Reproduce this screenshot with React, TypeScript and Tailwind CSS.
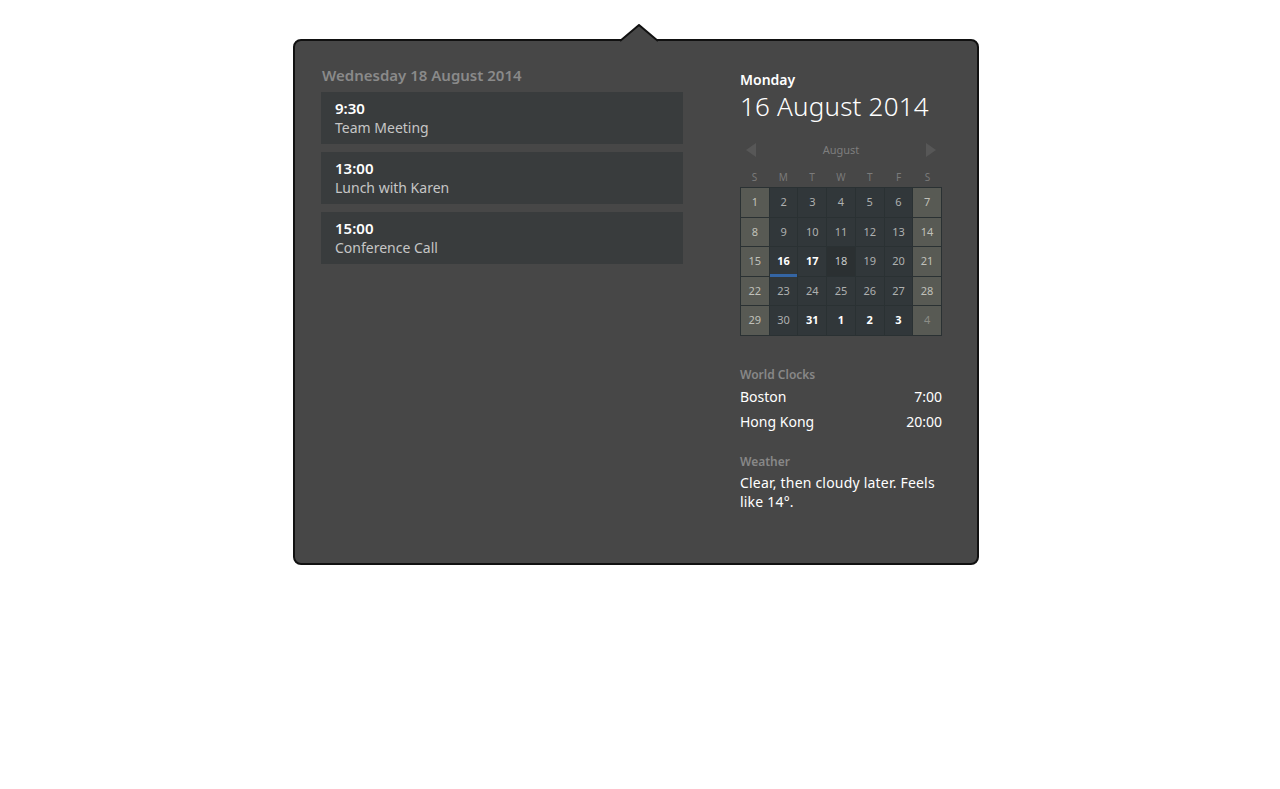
import React from "react";

const events = [
  { time: "9:30", title: "Team Meeting" },
  { time: "13:00", title: "Lunch with Karen" },
  { time: "15:00", title: "Conference Call" },
];

type Day = { n: number; weekend?: boolean; bold?: boolean; today?: boolean; selected?: boolean; other?: boolean };

const weeks: Day[][] = [
  [1, 2, 3, 4, 5, 6, 7],
  [8, 9, 10, 11, 12, 13, 14],
  [15, 16, 17, 18, 19, 20, 21],
  [22, 23, 24, 25, 26, 27, 28],
  [29, 30, 31, 1, 2, 3, 4],
].map((row, r) =>
  row.map((n, c) => ({
    n,
    weekend: c === 0 || c === 6,
    bold: (r === 2 && (c === 1 || c === 2)) || (r === 4 && c >= 2 && c <= 5),
    today: r === 2 && c === 1,
    selected: r === 2 && c === 3,
    other: r === 4 && c >= 3,
  }))
);

function DayCell({ d }: { d: Day }) {
  let cls = "relative flex items-center justify-center h-[28.6px] text-[11px] ";
  if (d.weekend) {
    cls += "bg-[#585a54] " + (d.other ? "text-[#8c8d86]" : "text-[#c0c1ba]");
  } else if (d.selected) {
    cls += "bg-[#2b3032] text-[#c8caca]";
  } else {
    cls += "bg-[#31373a] " + (d.bold ? "text-white font-bold" : "text-[#aeb0b0]");
  }
  return (
    <div className={cls}>
      {d.n}
      {d.today && <div className="absolute left-0 right-0 bottom-[-1px] h-[3px] bg-[#3465a4]" />}
    </div>
  );
}

export default function App() {
  return (
    <div
      className="min-h-[789px] bg-white pt-[39px]"
      style={{ fontFamily: '"Noto Sans", "Open Sans", sans-serif' }}
    >
      <div className="relative ml-[293px] w-[686px] h-[526px] rounded-[8px] border-2 border-[#111] bg-[#474747] flex">
        {/* popover arrow */}
        <svg
          className="absolute left-[325px] top-[-17px]"
          width="38"
          height="19"
          viewBox="0 0 38 19"
        >
          <path d="M0 17 L19 1 L38 17 L38 19 L0 19 Z" fill="#474747" />
          <path d="M0 17 L19 1 L38 17" fill="none" stroke="#111" strokeWidth="2" strokeLinejoin="round" />
        </svg>

        {/* left: events */}
        <div className="ml-[26px] w-[362px] pt-[24px]">
          <div className="text-[15px] leading-[20px] font-semibold text-[#8a8a8a] pl-px mb-[7px]">
            Wednesday 18 August 2014
          </div>
          <div className="flex flex-col gap-[8px]">
            {events.map((e) => (
              <div key={e.time} className="h-[52px] bg-[#393c3d] pl-[14px] pt-[7px]">
                <div className="text-[15px] leading-[19px] font-semibold text-white">{e.time}</div>
                <div className="text-[14px] leading-[20px] text-[#c6c6c6]">{e.title}</div>
              </div>
            ))}
          </div>
        </div>

        {/* right: date, calendar, clocks, weather */}
        <div className="ml-[57px] w-[202px] pt-[29px] text-white">
          <div className="text-[14px] leading-[20px] font-semibold">Monday</div>
          <div className="text-[26px] leading-[32px] font-light tracking-[0.2px]">16 August 2014</div>

          <div className="mt-[19px] h-[18px] flex items-center justify-between px-[6px]">
            <svg width="10" height="14" viewBox="0 0 10 14">
              <path d="M10 0 L0 7 L10 14 Z" fill="#575757" />
            </svg>
            <span className="text-[11px] text-[#7e7e7e]">August</span>
            <svg width="10" height="14" viewBox="0 0 10 14">
              <path d="M0 0 L10 7 L0 14 Z" fill="#575757" />
            </svg>
          </div>

          <div className="mt-[10px] grid grid-cols-7 h-[16px] text-[10px] leading-[16px] text-[#7a7a7a] text-center">
            {["S", "M", "T", "W", "T", "F", "S"].map((l, i) => (
              <span key={i}>{l}</span>
            ))}
          </div>

          <div className="mt-[2px] grid grid-cols-7 gap-px p-px bg-[#2a3133]">
            {weeks.flat().map((d, i) => (
              <DayCell key={i} d={d} />
            ))}
          </div>

          <div className="mt-[30px] text-[12px] leading-[18px] font-semibold text-[#888]">World Clocks</div>
          <div className="flex justify-between text-[14px] leading-[25px]">
            <span>Boston</span>
            <span>7:00</span>
          </div>
          <div className="flex justify-between text-[14px] leading-[25px]">
            <span>Hong Kong</span>
            <span>20:00</span>
          </div>

          <div className="mt-[19px] text-[12px] leading-[18px] font-semibold text-[#888]">Weather</div>
          <div className="mt-[2px] text-[14px] leading-[19px] tracking-[0.2px]">Clear, then cloudy later. Feels like 14°.</div>
        </div>
      </div>
    </div>
  );
}
